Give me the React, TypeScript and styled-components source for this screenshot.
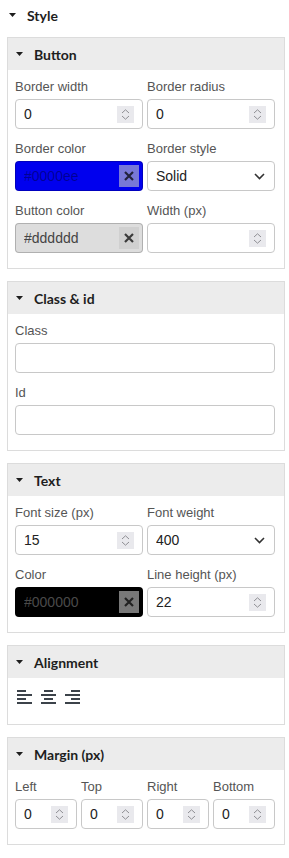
import React from "react";
import styled, { createGlobalStyle } from "styled-components";

const Global = createGlobalStyle`
  html, body { margin: 0; padding: 0; background: #fff; }
  body { font-family: "Liberation Sans", Arial, sans-serif; }
  * { box-sizing: border-box; }
`;

const Root = styled.div`
  width: 289px;
  padding: 0 4px 0 7px;
`;

const SectionHeader = styled.div`
  height: 30px;
  display: flex;
  align-items: center;
  padding-left: 2px;
  margin-bottom: 7px;
  font-family: Lato, "Liberation Sans", sans-serif;
  font-weight: 700;
  font-size: 14px;
  color: #1e1e1e;
`;

const Panels = styled.div`
  display: flex;
  flex-direction: column;
  gap: 12px;
`;

const Panel = styled.section`
  border: 1px solid #dcdcdc;
  background: #fff;
`;

const PanelHeader = styled.div`
  height: 32px;
  display: flex;
  align-items: center;
  padding-left: 8px;
  background: #ececec;
  font-family: Lato, "Liberation Sans", sans-serif;
  font-weight: 700;
  font-size: 14px;
  color: #1e1e1e;
`;

const CaretSvg = styled.svg`
  flex: none;
  margin-right: 11px;
`;

const Caret = () => (
  <CaretSvg width="7" height="4" viewBox="0 0 7 4">
    <polygon points="0,0 7,0 3.5,4" fill="#1e1e1e" />
  </CaretSvg>
);

const PanelBody = styled.div<{ $pad?: string }>`
  padding: ${(p) => p.$pad || "8px 9px 15px 7px"};
`;

const Grid = styled.div<{ $cols: number }>`
  display: grid;
  grid-template-columns: repeat(${(p) => p.$cols}, minmax(0, 1fr));
  column-gap: 4px;
  row-gap: 11px;
`;

const Field = styled.div`
  display: flex;
  flex-direction: column;
  min-width: 0;
`;

const Label = styled.label`
  font-size: 13px;
  line-height: 18px;
  color: #555;
  margin-bottom: 3px;
  white-space: nowrap;
`;

const Shell = styled.div<{ $bg?: string; $border?: string }>`
  height: 30px;
  display: flex;
  align-items: center;
  border: 1px solid ${(p) => p.$border || "#c8c8c8"};
  border-radius: 4px;
  background: ${(p) => p.$bg || "#fff"};
  padding: 0 8px 0 8px;
`;

const ColorShell = styled(Shell)`
  padding: 0 3px 0 8px;
`;

const Input = styled.input<{ $color?: string }>`
  flex: 1;
  min-width: 0;
  width: 100%;
  border: none;
  outline: none;
  background: transparent;
  padding: 0;
  font-family: "Liberation Sans", Arial, sans-serif;
  font-size: 14px;
  color: ${(p) => p.$color || "#222"};
  -moz-appearance: textfield;
  &::-webkit-inner-spin-button,
  &::-webkit-outer-spin-button {
    -webkit-appearance: none;
    margin: 0;
  }
`;

const SpinBox = styled.span`
  flex: none;
  width: 17px;
  height: 17px;
  background: #e9e9ed;
  display: flex;
  align-items: center;
  justify-content: center;
`;

const Spinner = () => (
  <SpinBox>
    <svg width="17" height="17" viewBox="0 0 17 17">
      <path d="M5 7 L8.5 3.8 L12 7" fill="none" stroke="#8f8f94" strokeWidth="1" />
      <path d="M5 10 L8.5 13.2 L12 10" fill="none" stroke="#8f8f94" strokeWidth="1" />
    </svg>
  </SpinBox>
);

const ClearBtn = styled.button`
  flex: none;
  width: 20px;
  height: 22px;
  border: none;
  padding: 0;
  background: rgba(200, 200, 200, 0.6);
  display: flex;
  align-items: center;
  justify-content: center;
  cursor: pointer;
`;

const ClearIcon = () => (
  <svg width="10" height="10" viewBox="0 0 10 10">
    <path d="M1 1 L9 9 M9 1 L1 9" stroke="rgba(0,0,0,0.72)" strokeWidth="2.2" />
  </svg>
);

const Select = styled.select`
  flex: 1;
  min-width: 0;
  border: none;
  outline: none;
  background: transparent;
  appearance: none;
  -webkit-appearance: none;
  padding: 0;
  font-family: "Liberation Sans", Arial, sans-serif;
  font-size: 14px;
  color: #222;
`;

const SelectShell = styled(Shell)`
  padding: 0 9px 0 8px;
`;

const Chevron = () => (
  <svg width="11" height="7" viewBox="0 0 11 7">
    <path d="M1 1 L5.5 5.5 L10 1" fill="none" stroke="#333" strokeWidth="1.6" />
  </svg>
);

const AlignRow = styled.div`
  display: flex;
  gap: 5px;
`;

const AlignButton = styled.button`
  border: none;
  background: none;
  padding: 0 2px;
  height: 14px;
  display: flex;
  align-items: center;
  cursor: pointer;
`;

const AlignIcon = ({ mode }: { mode: "left" | "center" | "right" }) => {
  const shortX = mode === "left" ? 0 : mode === "center" ? 3 : 6;
  return (
    <svg width="15" height="14" viewBox="0 0 15 14">
      <rect x={shortX} y="0" width="9" height="2" fill="#3c434a" />
      <rect x="0" y="4" width="15" height="2" fill="#3c434a" />
      <rect x={shortX} y="8" width="9" height="2" fill="#3c434a" />
      <rect x="0" y="12" width="15" height="2" fill="#3c434a" />
    </svg>
  );
};

const NumberField = ({ label, value }: { label: string; value: string }) => (
  <Field>
    <Label>{label}</Label>
    <Shell>
      <Input type="number" defaultValue={value} />
      <Spinner />
    </Shell>
  </Field>
);

const ColorField = ({
  label,
  value,
  bg,
  color,
}: {
  label: string;
  value: string;
  bg: string;
  color: string;
}) => (
  <Field>
    <Label>{label}</Label>
    <ColorShell $bg={bg} $border="rgba(0,0,0,0.2)">
      <Input type="text" defaultValue={value} $color={color} />
      <ClearBtn aria-label="Clear">
        <ClearIcon />
      </ClearBtn>
    </ColorShell>
  </Field>
);

const SelectField = ({
  label,
  value,
  options,
}: {
  label: string;
  value: string;
  options: string[];
}) => (
  <Field>
    <Label>{label}</Label>
    <SelectShell>
      <Select defaultValue={value}>
        {options.map((o) => (
          <option key={o}>{o}</option>
        ))}
      </Select>
      <Chevron />
    </SelectShell>
  </Field>
);

const TextField = ({ label }: { label: string }) => (
  <Field>
    <Label>{label}</Label>
    <Shell>
      <Input type="text" />
    </Shell>
  </Field>
);

export default function App() {
  return (
    <Root>
      <Global />
      <SectionHeader>
        <Caret />
        Style
      </SectionHeader>
      <Panels>
        <Panel>
          <PanelHeader>
            <Caret />
            Button
          </PanelHeader>
          <PanelBody>
            <Grid $cols={2}>
              <NumberField label="Border width" value="0" />
              <NumberField label="Border radius" value="0" />
              <ColorField label="Border color" value="#0000ee" bg="#0000ee" color="rgba(0,0,0,0.38)" />
              <SelectField label="Border style" value="Solid" options={["Solid", "Dashed", "Dotted", "None"]} />
              <ColorField label="Button color" value="#dddddd" bg="#dddddd" color="#444" />
              <NumberField label="Width (px)" value="" />
            </Grid>
          </PanelBody>
        </Panel>

        <Panel>
          <PanelHeader>
            <Caret />
            Class &amp; id
          </PanelHeader>
          <PanelBody>
            <Grid $cols={1}>
              <TextField label="Class" />
              <TextField label="Id" />
            </Grid>
          </PanelBody>
        </Panel>

        <Panel>
          <PanelHeader>
            <Caret />
            Text
          </PanelHeader>
          <PanelBody>
            <Grid $cols={2}>
              <NumberField label="Font size (px)" value="15" />
              <SelectField label="Font weight" value="400" options={["100", "200", "300", "400", "500", "600", "700", "800", "900"]} />
              <ColorField label="Color" value="#000000" bg="#000000" color="#4a4a4a" />
              <NumberField label="Line height (px)" value="22" />
            </Grid>
          </PanelBody>
        </Panel>

        <Panel>
          <PanelHeader>
            <Caret />
            Alignment
          </PanelHeader>
          <PanelBody $pad="12px 9px 20px 7px">
            <AlignRow>
              <AlignButton aria-label="Align left">
                <AlignIcon mode="left" />
              </AlignButton>
              <AlignButton aria-label="Align center">
                <AlignIcon mode="center" />
              </AlignButton>
              <AlignButton aria-label="Align right">
                <AlignIcon mode="right" />
              </AlignButton>
            </AlignRow>
          </PanelBody>
        </Panel>

        <Panel>
          <PanelHeader>
            <Caret />
            Margin (px)
          </PanelHeader>
          <PanelBody>
            <Grid $cols={4}>
              <NumberField label="Left" value="0" />
              <NumberField label="Top" value="0" />
              <NumberField label="Right" value="0" />
              <NumberField label="Bottom" value="0" />
            </Grid>
          </PanelBody>
        </Panel>
      </Panels>
    </Root>
  );
}
